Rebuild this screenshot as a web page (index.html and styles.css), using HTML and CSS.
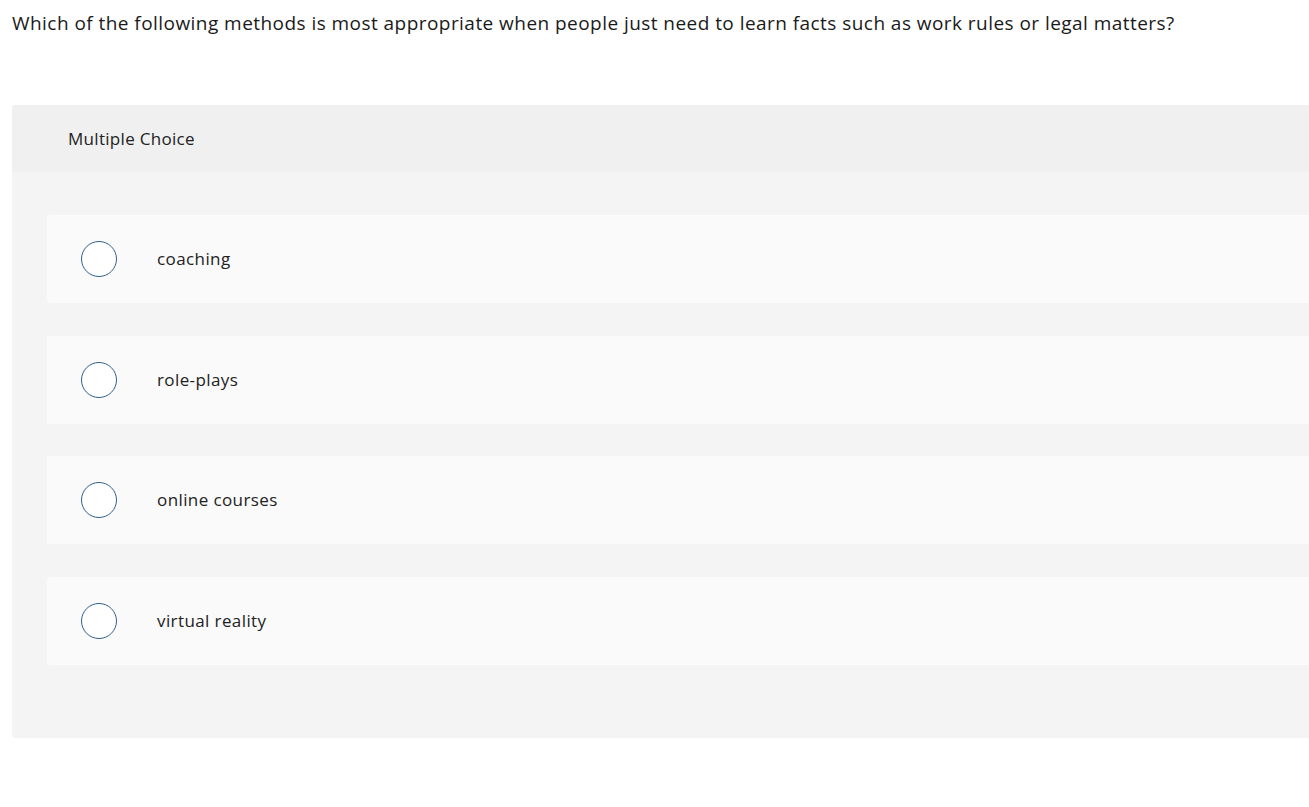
FILE: index.html
```html
<!DOCTYPE html>
<html>
<head>
<meta charset="utf-8">
<link rel="stylesheet" href="styles.css">
</head>
<body>
<p class="question">Which of the following methods is most appropriate when people just need to learn facts such as work rules or legal matters?</p>
<div class="panel">
  <div class="panel-head">Multiple Choice</div>
  <div class="panel-body">
    <label class="option"><span class="radio"></span><span class="opt-text">coaching</span></label>
    <label class="option"><span class="radio"></span><span class="opt-text">role-plays</span></label>
    <label class="option"><span class="radio"></span><span class="opt-text">online courses</span></label>
    <label class="option"><span class="radio"></span><span class="opt-text">virtual reality</span></label>
  </div>
</div>
</body>
</html>
```
FILE: styles.css
```css
html, body {
  margin: 0;
  padding: 0;
  overflow: hidden;
  background: #fff;
}
body {
  font-family: "Open Sans", Lato, sans-serif;
  color: #222;
}
.question {
  margin: 0;
  padding: 10px 0 0 12px;
  font-size: 19px;
  line-height: 26px;
  letter-spacing: 0.45px;
  color: #1a1a1a;
  white-space: nowrap;
}
.panel {
  margin: 69px 0 0 12px;
  width: 1320px;
  border-radius: 3px;
  background: #f4f4f4;
  overflow: hidden;
}
.panel-head {
  height: 67px;
  background: #f0f0f0;
  padding-left: 56px;
  display: flex;
  align-items: center;
  font-size: 17px;
  letter-spacing: 0.3px;
  color: #222;
}
.panel-body {
  padding: 43px 0 73px 35px;
  display: flex;
  flex-direction: column;
  gap: 32.5px;
}
.option {
  height: 88px;
  background: #fafafa;
  border-radius: 3px;
  display: flex;
  align-items: center;
  padding-left: 34px;
}
.radio {
  width: 34px;
  height: 34px;
  border: 1px solid #2f5f8f;
  border-radius: 50%;
  background: #fff;
  flex: none;
}
.opt-text {
  margin-left: 40px;
  padding-bottom: 1px;
  font-size: 17px;
  letter-spacing: 0.4px;
  color: #222;
}
```
